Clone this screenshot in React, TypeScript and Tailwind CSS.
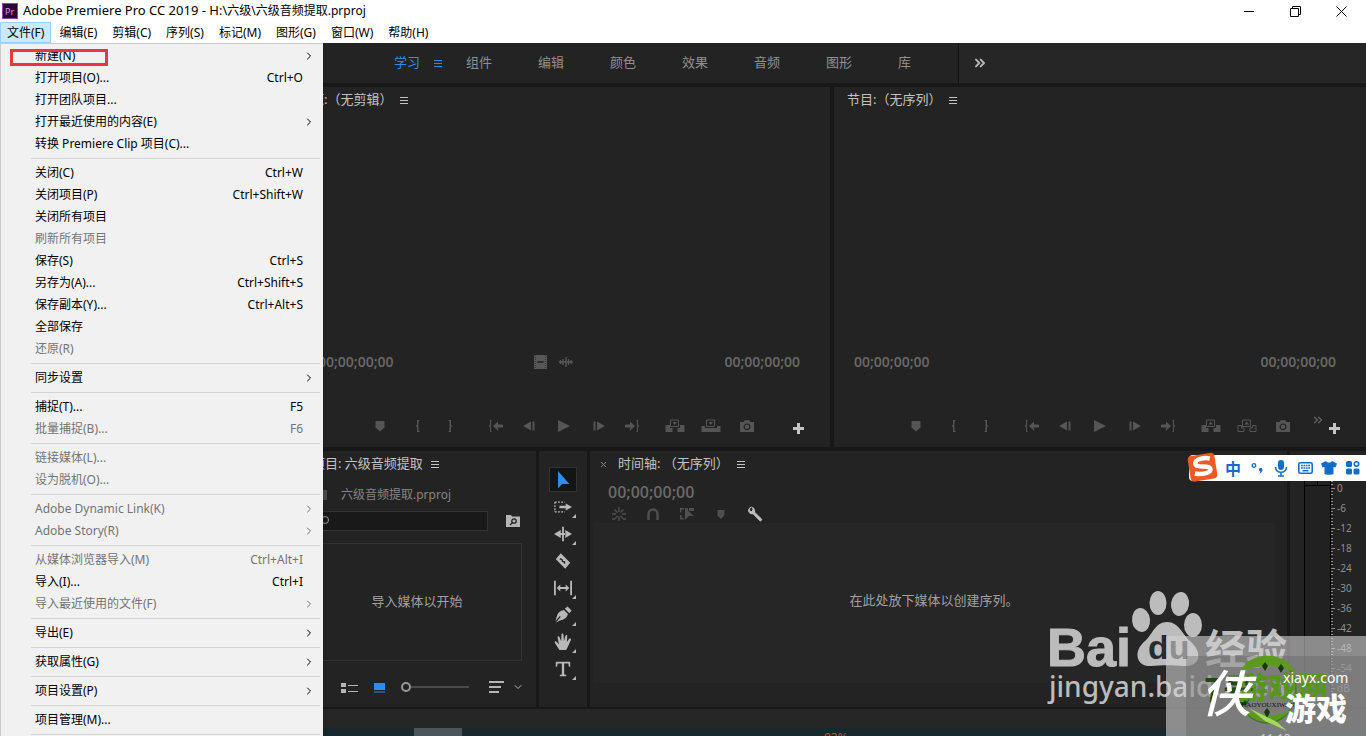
import React, { useState } from 'react';
import { ChevronDown, ChevronRight, ChevronsRight } from 'lucide-react';

type MenuEntry = { label: string; keys?: string; sub?: boolean; off?: boolean };

const menuBar = ['文件(F)', '编辑(E)', '剪辑(C)', '序列(S)', '标记(M)', '图形(G)', '窗口(W)', '帮助(H)'];

const fileMenu: MenuEntry[][] = [
  [
    { label: '新建(N)', sub: true },
    { label: '打开项目(O)...', keys: 'Ctrl+O' },
    { label: '打开团队项目...' },
    { label: '打开最近使用的内容(E)', sub: true },
    { label: '转换 Premiere Clip 项目(C)...' },
  ],
  [
    { label: '关闭(C)', keys: 'Ctrl+W' },
    { label: '关闭项目(P)', keys: 'Ctrl+Shift+W' },
    { label: '关闭所有项目' },
    { label: '刷新所有项目', off: true },
    { label: '保存(S)', keys: 'Ctrl+S' },
    { label: '另存为(A)...', keys: 'Ctrl+Shift+S' },
    { label: '保存副本(Y)...', keys: 'Ctrl+Alt+S' },
    { label: '全部保存' },
    { label: '还原(R)', off: true },
  ],
  [{ label: '同步设置', sub: true }],
  [
    { label: '捕捉(T)...', keys: 'F5' },
    { label: '批量捕捉(B)...', keys: 'F6', off: true },
  ],
  [
    { label: '链接媒体(L)...', off: true },
    { label: '设为脱机(O)...', off: true },
  ],
  [
    { label: 'Adobe Dynamic Link(K)', sub: true, off: true },
    { label: 'Adobe Story(R)', sub: true, off: true },
  ],
  [
    { label: '从媒体浏览器导入(M)', keys: 'Ctrl+Alt+I', off: true },
    { label: '导入(I)...', keys: 'Ctrl+I' },
    { label: '导入最近使用的文件(F)', sub: true, off: true },
  ],
  [{ label: '导出(E)', sub: true }],
  [{ label: '获取属性(G)', sub: true }],
  [{ label: '项目设置(P)', sub: true }],
  [{ label: '项目管理(M)...' }],
];

const workspaces = ['学习', '组件', '编辑', '颜色', '效果', '音频', '图形', '库'];
const levels = ['0', '-6', '-12', '-18', '-24', '-30', '-36', '-42', '-48', '-54', 'dB'];

function Lines() {
  return (
    <svg width="8" height="7" viewBox="0 0 8 7" stroke="currentColor">
      <path d="M0 .5h8M0 3.500h8M0 6.500h8" />
    </svg>
  );
}

function PanelTitle({ children }: { children: React.ReactNode }) {
  return (
    <div className="flex h-[26px] shrink-0 items-center gap-2 whitespace-nowrap text-[13px] text-[#c2c2c2]">
      <h2>{children}</h2>
      <button aria-label="面板菜单"><Lines /></button>
    </div>
  );
}

function IconButton({ label, className, children }: { label: string; className: string; children: React.ReactNode }) {
  return (
    <button aria-label={label} className={`flex h-8 items-center justify-center ${className}`}>
      <svg width="20" height="16" viewBox="0 0 20 16" fill="currentColor">{children}</svg>
    </button>
  );
}

// The two monitors share everything but the clip icons and the last edit buttons
function Monitor({ title, source }: { title: string; source?: boolean }) {
  return (
    <section className="flex min-w-0 flex-1 flex-col bg-[#232323] pb-[5px]">
      <div className="pl-[13px]"><PanelTitle>{title}</PanelTitle></div>
      <div className="flex-1" />
      <div className="mb-9 flex h-6 items-center justify-between pl-5 pr-[30px] font-['Open_Sans',sans-serif] text-sm font-semibold text-[#6a6a6a]">
        <span>00;00;00;00</span>
        {source && (
          <div className="flex items-center gap-3 pr-3 text-[#575757]">
            <svg width="13" height="14" viewBox="0 0 13 14">
              <path fill="currentColor" d="M0 0h13v14H0z" />
              <path stroke="#232323" strokeDasharray="1 1" d="M1.5 0v14M11.5 0v14" opacity=".6" />
              <path stroke="#1b1b1b" strokeWidth="1.4" d="M3.5 7h6" />
            </svg>
            <svg width="14" height="12" viewBox="0 0 14 12" stroke="currentColor">
              <path d="M0 6h14M1.500 4v4M4 3v6M7 1v10M9.500 3v6M12 4v4" strokeWidth="1.300" />
            </svg>
          </div>
        )}
        <span>00;00;00;00</span>
      </div>
      <div className="flex items-center text-[#555]">
        <div className="flex-1" />
        <IconButton label="添加标记" className="mr-[5px] w-[34px]">
          <path d="M5.500 3h9v6.500L10 13.500 5.500 9.500z" />
        </IconButton>
        <IconButton label="标记入点" className="w-8">
          <path d="M11.500 2H9v5L7.500 8 9 9v5h2.500v-1H10.500V8.500L10 8l.5-.5V3h1z" />
        </IconButton>
        <IconButton label="标记出点" className="mr-[13px] w-8">
          <path d="M8.500 2H11v5l1.500 1L11 9v5H8.500v-1h1V8.500L10 8l-.5-.5V3h-1z" />
        </IconButton>
        <IconButton label="转到入点" className="w-[34px]">
          <path d="M5.500 2H4v5L2.500 8 4 9v5h1.500v-1H5V3h.5zM12 3.500v3h5v3h-5v3L7 8z" />
        </IconButton>
        <IconButton label="后退一帧" className="w-[34px]">
          <path d="M3 8l8-4.500v9zM12.500 3.500H14.500v9H12.500z" />
        </IconButton>
        <IconButton label="播放" className="w-[34px]">
          <path d="M4 2l12 6-12 6z" />
        </IconButton>
        <IconButton label="前进一帧" className="w-[34px]">
          <path d="M17 8L9 3.500v9zM5.500 3.500H7.500v9H5.500z" />
        </IconButton>
        <IconButton label="转到出点" className="mr-2 w-[34px]">
          <path d="M14.500 2H16v5l1.500 1L16 9v5h-1.500v-1h.5V3h-.5zM8 3.500v3H3v3h5v3L13 8z" />
        </IconButton>
        <IconButton label={source ? '插入' : '提升'} className="w-9">
          <path d="M.5 7H5v3h2.500v4h-7zM12.500 10H15V7h4.500v7h-7z" />
          <path d="M5.500 2h8v6.500h-8z" fill="none" stroke="currentColor" />
          <path d={source ? 'M7.500 4h4.500L9.700 7z' : 'M7.500 6.500h4.500L9.700 3.500z'} />
        </IconButton>
        <IconButton label={source ? '覆盖' : '提取'} className="w-9">
          {source
            ? <path d="M.5 8H4v2h12V8h3.500v6H.5z" />
            : <path d="M1 7.500h3.500V10H7v3.500H1zM19 7.500h-3.500V10H13v3.500h6z" fill="none" stroke="currentColor" />}
          <path d="M5.500 2h8v6.500h-8z" fill="none" stroke="currentColor" />
          <path d={source ? 'M7.500 4h4.500L9.700 7z' : 'M7.500 6.500h4.500L9.700 3.500z'} />
        </IconButton>
        <IconButton label="导出帧" className="w-9">
          <path d="M3 4h3.500l1-1.800h5l1 1.800H17v10H3z" />
          <circle cx="10" cy="8.800" r="2.800" fill="none" stroke="#232323" strokeWidth="1.200" />
        </IconButton>
        <div className="flex flex-1 justify-end">
          {!source && (
            <button aria-label="更多按钮" className="mb-3 mr-1 text-[#6a6a6a]"><ChevronsRight size={14} strokeWidth={2} /></button>
          )}
          <button aria-label="按钮编辑器" className="mr-[26px] mt-1 text-[#c4c4c4]">
            <svg width="11" height="11" viewBox="0 0 11 11" fill="currentColor"><path d="M4 0h3v4h4v3H7v4H4V7H0V4h4z" /></svg>
          </button>
        </div>
      </div>
    </section>
  );
}

const tools = [
  { label: '选择工具', art: <path d="M4.500 0v19.500l4.500-5h8z" fill="#2d8cf0" /> },
  {
    label: '向前选择轨道工具',
    art: (
      <>
        <path d="M1 4.500h11M1 15.500h11M1 4.500v11" fill="none" stroke="currentColor" strokeWidth="1.400" strokeDasharray="2 1.500" />
        <path d="M6 8.500h7V6l7 4-7 4v-2.500H6z" />
      </>
    ),
    more: true,
  },
  { label: '波纹编辑工具', art: <path d="M9 2h2v16H9zM7.500 5.500v9L0 10zM12.500 5.500v9L20 10zM7 9h6v2H7z" />, more: true },
  {
    label: '剃刀工具',
    art: (
      <>
        <path d="M7.500 1.500L18 12l-5.500 6.500L2 8z" />
        <path d="M6.500 7.500l2.500 1 .5 2 2 .5.500 2" fill="none" stroke="#232323" strokeWidth="1.500" />
      </>
    ),
  },
  {
    label: '外滑工具',
    art: <path d="M0 2h2v16H0zM18 2h2v16h-2zM3 10l4-4v3h6V6l4 4-4 4v-3H7v3z" />,
    more: true,
  },
  {
    label: '钢笔工具',
    art: <path d="M12 3l3-2.500 4.500 4.500L17 8zM11 4.500l4.500 4.500c-1 4-4 6.500-9 7L2 18.500l5.500-6.500-1-1L1.500 17 3 12c1-4.500 4-7 8-7.500z" />,
    more: true,
  },
  {
    label: '手形工具',
    art: <path d="M6 19l-5-8c-.8-1.500.8-2.300 1.700-1.200L5.500 12.500 4 5c-.2-1.600 1.700-1.900 2.100-.3L8 9l.3-7.200c0-1.700 2.200-1.700 2.200 0L11 9l1.700-6c.5-1.500 2.300-1 2 .5L14.300 10l2.500-3.500c1-1 2.700 0 2 1.300L15 16l-1.500 3z" />,
    more: true,
  },
  { label: '文字工具', art: <path d="M2 2h16v5.500h-1.500L16 4h-4.700v12l2.200.5V18h-7v-1.500l2.200-.5V4H4l-.5 3.500H2z" />, more: true },
];

function FileMenu() {
  return (
    <div role="menu" className="absolute left-0 top-full z-20 w-[323px] border-l border-t border-[#c9c9c9] bg-[#f1f1f1] pb-2 pt-px shadow-md">
      {fileMenu.map((group, i) => (
        <div key={i} className="ml-[30px]">
          {i > 0 && <hr className="my-[3px] mr-[3px] border-[#d5d5d5]" />}
          {group.map(item => (
            <button
              key={item.label}
              role="menuitem"
              disabled={item.off}
              className="flex h-[22px] w-full items-center pl-1 text-left text-black hover:bg-[#91c9f7] disabled:text-[#747474]"
            >
              <span className="flex-1">{item.label}</span>
              {item.keys && <span className="mr-5">{item.keys}</span>}
              {item.sub && <ChevronRight size={12} strokeWidth={2} className="mr-2" />}
            </button>
          ))}
        </div>
      ))}
      <hr className="ml-[30px] mr-[3px] mt-[3px] border-[#d5d5d5]" />
    </div>
  );
}

function ProjectPanel() {
  const [size, setSize] = useState(0);
  return (
    <section className="flex w-[238px] shrink-0 flex-col bg-[#232323] pl-[14px] pr-[14px]">
      <PanelTitle>项目: 六级音频提取</PanelTitle>
      <div className="mt-2 flex h-5 items-center gap-[14px] text-xs text-[#858585]">
        <span className="h-[10px] w-[15px] bg-[#4a4a4a]" />
        <span className="whitespace-nowrap">六级音频提取.prproj</span>
      </div>
      <div className="mt-[6px] flex items-center justify-between">
        <div className="relative">
          <input aria-label="搜索" className="block h-5 w-[176px] border border-[#333] bg-[#191919] pl-5 text-xs text-[#bbb] outline-none" />
          <svg className="absolute left-1 top-1" width="14" height="12" viewBox="0 0 14 12" fill="none" stroke="#999">
            <circle cx="9" cy="5" r="3.500" /><path d="M6 7l-4 4" />
          </svg>
        </div>
        <button aria-label="新建搜索素材箱" className="mr-[2px]">
          <svg width="14" height="12" viewBox="0 0 14 12">
            <path d="M0 0h5l1 1.500h8V12H0z" fill="#b5b5b5" />
            <circle cx="8" cy="6" r="2.200" fill="none" stroke="#232323" strokeWidth="1.300" />
            <path d="M6.500 7.500L4 10" stroke="#232323" strokeWidth="1.300" />
          </svg>
        </button>
      </div>
      <div className="mt-3 flex h-[118px] items-center justify-center border border-[#333] text-[13px] text-[#a0a0a0]">
        导入媒体以开始
      </div>
      <div className="flex flex-1 items-center pl-[29px] pt-[6px] text-[#b5b5b5]">
        <button aria-label="列表视图">
          <svg width="17" height="11" viewBox="0 0 17 11" fill="currentColor"><path d="M0 1h5v4H0zM0 7h5v4H0zM7 3h10v1H7zM7 9h10v1H7z" /></svg>
        </button>
        <button aria-label="图标视图" className="ml-4">
          <svg width="11" height="11" viewBox="0 0 11 11" fill="#2d8cf0"><path d="M0 1h11v7H0zM0 9.500h11v1H0z" /></svg>
        </button>
        <input
          type="range"
          aria-label="缩放"
          value={size}
          onChange={e => setSize(Number(e.target.value))}
          className="ml-4 h-[2px] w-[68px] appearance-none bg-[#4a4a4a] [&::-webkit-slider-thumb]:size-[10px] [&::-webkit-slider-thumb]:appearance-none [&::-webkit-slider-thumb]:rounded-full [&::-webkit-slider-thumb]:border-2 [&::-webkit-slider-thumb]:border-solid [&::-webkit-slider-thumb]:border-[#999] [&::-webkit-slider-thumb]:bg-[#232323]"
        />
        <button aria-label="排序" className="ml-5">
          <svg width="15" height="12" viewBox="0 0 15 12" fill="currentColor"><path d="M0 0h15v2H0zM0 5h12v2H0zM0 10h10v2H0z" /></svg>
        </button>
        <button aria-label="排序选项" className="ml-2"><ChevronDown size={12} strokeWidth={2} /></button>
      </div>
    </section>
  );
}

function Timeline() {
  return (
    <section className="flex min-w-0 flex-1 flex-col bg-[#232323] pl-[3px]">
      <div className="flex items-center gap-3 pl-2">
        <button aria-label="关闭时间轴" className="text-[#8a8a8a]">
          <svg width="5" height="5" viewBox="0 0 5 5" stroke="currentColor"><path d="M0 0l5 5M5 0L0 5" /></svg>
        </button>
        <PanelTitle>时间轴: （无序列）</PanelTitle>
      </div>
      <div className="mt-[3px] h-[25px] pl-[15px] font-['Open_Sans',sans-serif] text-base/6 font-semibold text-[#6a6a6a]">00;00;00;00</div>
      <div className="flex h-[18px] items-center pl-[9px] text-[#4f4f4f]">
        <IconButton label="嵌套序列" className="w-[34px]">
          <path d="M10 1v5M5.500 3.500l3 3M14.500 3.500l-3 3M3 8h4M13 8h4M6 12.500l2.500-2.500M14 12.500l-2.500-2.500M10 10.500V15M3 13h3M14 13h3" stroke="currentColor" strokeWidth="1.400" />
        </IconButton>
        <IconButton label="对齐" className="w-[34px]">
          <path d="M5.500 14V8a4.500 4.500 0 019 0v6" fill="none" stroke="currentColor" strokeWidth="2.500" />
        </IconButton>
        <IconButton label="链接选择项" className="w-[34px]">
          <path d="M3 2h4v1.500H4.500v3H3zM3 9h1.500v3H7v1.500H3zM8 2h3v4H8zM12 2h5v3h-5zM8 2l9 8h-5l-4 4z" />
        </IconButton>
        <IconButton label="添加标记" className="w-[34px]">
          <path d="M6.500 4h7v5L10 13 6.500 9.500z" />
        </IconButton>
        <IconButton label="时间轴显示设置" className="w-[34px] text-[#c0c0c0]">
          <path d="M6.500 1C4.800 1.300 3.300 3 3.500 5c.3 2 2.500 3.300 4.500 2.800l6.500 6.700c1.200 1.200 3-.6 1.800-1.800L9.600 6.200C10 4 9 2 7.500 1.300L8 4 6.500 5.500 4.500 5 4.300 3z" stroke="currentColor" strokeWidth=".8" />
        </IconButton>
      </div>
      <div className="mb-6 mr-3 flex flex-1 items-center justify-center bg-[#262626] pb-1 text-[13px] text-[#a0a0a0]">
        在此处放下媒体以创建序列。
      </div>
    </section>
  );
}

function Meters() {
  return (
    <section className="flex w-[76px] shrink-0 bg-[#232323] pl-[14px] pt-[26px]">
      <div className="mb-2 w-[27px] border-x border-black bg-[#212121]">
        <div className="mx-auto h-[9px] border-b border-black"><div className="mx-auto h-full w-px bg-black" /></div>
      </div>
      <ul className="pt-px text-[10px] text-[#8f8f8f]">
        {levels.map(level => (
          <li key={level} className="flex h-5 items-center gap-[2px]">
            <svg width="4" height="20" viewBox="0 0 4 20" stroke="#8f8f8f">
              <path d="M0 .5h2M0 3.500h2M0 6.500h2M0 10.500h4M0 13.500h2M0 16.500h2" />
            </svg>
            {level}
          </li>
        ))}
      </ul>
    </section>
  );
}

function InputMethodBar() {
  return (
    <div className="absolute right-0 top-[455px] z-30 flex h-[26px] items-center rounded-l bg-white pl-[30px] pr-px text-[#0f6ecb]">
      <svg className="absolute -left-[2px] -top-1" width="34" height="32" viewBox="0 0 34 32">
        <g transform="rotate(-9 17 16)">
          <rect x="2" y="3" width="27" height="26" rx="4" fill="#ea5a24" />
          <path d="M24 8.500c-5-2-15-2-15 3 0 5 14 2.500 14 7.500 0 4.500-11 4-16 2" fill="none" stroke="#fff" strokeWidth="4.500" />
        </g>
      </svg>
      <button aria-label="中英文切换" className="flex w-6 justify-center pl-1 font-['Noto_Sans_CJK_SC',sans-serif] text-base font-bold">中</button>
      <button aria-label="标点" className="ml-[2px] flex w-6 justify-center">
        <svg width="12" height="12" viewBox="0 0 12 12" fill="currentColor">
          <circle cx="3" cy="3.500" r="1.800" fill="none" stroke="currentColor" strokeWidth="1.300" />
          <path d="M8 7.500a1.700 1.700 0 013.400 0c0 2-1 3.500-3 4.300.7-1 .9-1.700.9-2.400C8.500 9.200 8 8.500 8 7.500z" />
        </svg>
      </button>
      <button aria-label="语音" className="flex w-6 justify-center">
        <svg width="14" height="17" viewBox="0 0 14 17">
          <rect x="4" y="0" width="6" height="10" rx="3" fill="currentColor" />
          <path d="M1.500 7c0 7 11 7 11 0M7 12v4M4 16h6" fill="none" stroke="currentColor" strokeWidth="1.600" />
        </svg>
      </button>
      <button aria-label="软键盘" className="flex w-6 justify-center">
        <svg width="15" height="12" viewBox="0 0 15 12">
          <rect x=".8" y=".8" width="13.400" height="10.400" rx="1.500" fill="none" stroke="currentColor" strokeWidth="1.600" />
          <path d="M3 3.500h9M3 6h9" stroke="currentColor" strokeWidth="1.500" strokeDasharray="1.800 .6" />
          <path d="M4.500 8.700h6" stroke="currentColor" strokeWidth="1.500" />
        </svg>
      </button>
      <button aria-label="皮肤" className="flex w-6 justify-center">
        <svg width="16" height="14" viewBox="0 0 16 14" fill="currentColor"><path d="M5 0c1 2 5 2 6 0l5 2.500-1.500 4-2-.5v7c0 1-9 1-9 0V6l-2 .5L0 2.500z" /></svg>
      </button>
      <button aria-label="工具箱" className="flex w-6 justify-center">
        <svg width="14" height="14" viewBox="0 0 14 14" fill="currentColor">
          <rect width="6" height="6" rx="1.500" /><rect y="7.500" width="6" height="6" rx="1.500" /><rect x="7.500" y="7.500" width="6" height="6" rx="1.500" />
          <circle cx="10.500" cy="3" r="2.200" fill="none" stroke="currentColor" strokeWidth="1.600" />
        </svg>
      </button>
    </div>
  );
}

function Watermarks() {
  return (
    <div className="pointer-events-none absolute bottom-0 right-0 z-30 h-[150px] w-[320px] overflow-hidden">
      <svg width="320" height="150" viewBox="0 0 320 150">
        <g fill="#bcbcbc">
          <text x="1" y="80" fontFamily="Liberation Sans" fontSize="54" fontWeight="bold" stroke="#bcbcbc">Bai</text>
          <ellipse cx="95" cy="34" rx="9" ry="12" transform="rotate(-6 95 34)" />
          <ellipse cx="112" cy="17" rx="8.500" ry="12" />
          <ellipse cx="134" cy="18" rx="9" ry="12" transform="rotate(8 134 18)" />
          <ellipse cx="147" cy="39" rx="9" ry="12" />
          <path d="M121 36c-12 0-14 12-22 19-13 11-8 26 6 25 10-1 22-1 32 0 18 1 20-14 7-25-8-7-11-19-23-19z" />
          <text x="159" y="78" fontFamily="Noto Sans CJK SC" fontSize="41" fontWeight="bold">经验</text>
          <text x="3" y="111" fontFamily="Noto Sans" fontSize="28" fontWeight="500">jingyan.baidu.com</text>
        </g>
        <text x="102" y="73" fontFamily="Liberation Sans" fontSize="34" fontWeight="bold" fill="#2b2b2b">du</text>
        <path d="M120 50h200v100H120z" fill="#d2d2d2" opacity=".6" />
        <path d="M140 70h180v80H140z" fill="#5f5f5f" opacity=".35" />
        <ellipse cx="221" cy="104" rx="29" ry="33" fill="none" stroke="#3c7d13" strokeWidth="1.500" />
        <path d="M194 86c8-20 44-24 56 2-14-10-38-10-56-2z" fill="#5c9a1b" />
        <path d="M196 122c14 8 34 10 48 2-8 14-36 16-48-2z" fill="#5c9a1b" />
        <path d="M219 76l3 4-3 5-3-5zM235 78l3 4-3 5-3-5zM221 122l3 4-3 6-3-6z" fill="#17380b" />
        <text x="158" y="116" fontFamily="Noto Sans CJK SC" fontSize="32" fontWeight="bold" fill="#1d4a12">7号</text>
        <text x="192" y="112" fontFamily="Noto Sans CJK SC" fontSize="30" fontWeight="900" fill="#57961a">游戏网</text>
        <text x="191" y="121" fontFamily="Liberation Serif" fontSize="7" fill="#111">ZHAOYOUXIWANG</text>
        <path d="M203 122l28 14 10 9-22-10z" fill="#a5d85b" />
        <g fill="#fff">
          <text x="155" y="126" fontFamily="Noto Sans CJK SC" fontSize="50" fontWeight="500" fontStyle="italic">侠</text>
          <text x="239" y="134" fontFamily="Noto Sans CJK SC" fontSize="31" fontWeight="900">游戏</text>
          <text x="237" y="97" fontFamily="Noto Sans" fontSize="14">xiayx.com</text>
        </g>
        <text x="214" y="157" fontFamily="Noto Sans" fontSize="12" fill="#d0d0d0">11:18</text>
      </svg>
    </div>
  );
}

export default function App() {
  const [workspace, setWorkspace] = useState('学习');
  const [tool, setTool] = useState('选择工具');

  return (
    <div className="relative flex h-screen w-full flex-col overflow-hidden bg-[#181818] font-['Noto_Sans','Noto_Sans_CJK_SC',sans-serif]">
      {/* Title bar */}
      <header className="flex h-[22px] shrink-0 items-center bg-white pl-[2px] text-black">
        <svg width="16" height="16" viewBox="0 0 16 16">
          <rect x=".5" y=".5" width="15" height="15" fill="#2a0634" stroke="#9b3fb5" />
          <text x="3" y="11.500" fontFamily="Noto Sans" fontSize="9" fill="#e38cff">Pr</text>
        </svg>
        <h1 className="ml-[5px] flex items-baseline whitespace-pre text-[13px]">
          Adobe Premiere Pro CC 2019 - H:\<span className="text-xs">六级\六级音频提取.prproj</span>
        </h1>
        <div className="ml-auto flex pr-[2px]">
          <button aria-label="最小化" className="flex w-[46px] justify-center">
            <svg width="11" height="11" viewBox="0 0 11 11" stroke="#000"><path d="M0 5.500h10" /></svg>
          </button>
          <button aria-label="还原" className="flex w-[46px] justify-center">
            <svg width="11" height="11" viewBox="0 0 11 11" fill="none" stroke="#000"><path d="M.5 2.500h8v8h-8zM2.500 2.500v-2h8v8h-2" /></svg>
          </button>
          <button aria-label="关闭" className="flex w-[46px] justify-center">
            <svg width="11" height="11" viewBox="0 0 11 11" stroke="#000"><path d="M.5.5l10 10M10.500.5l-10 10" /></svg>
          </button>
        </div>
      </header>

      <nav className="relative flex h-[21px] shrink-0 gap-px bg-white text-xs">
        {menuBar.map((name, i) => (
          <button
            key={name}
            className={`h-full whitespace-nowrap px-[7px] ${i === 0 ? 'bg-[#cce8ff] outline outline-1 -outline-offset-1 outline-[#99d1ff]' : ''}`}
          >
            {name}
          </button>
        ))}
        <FileMenu />
        <div className="absolute left-[10px] top-[27px] z-30 h-[17px] w-[98px] border-[3px] border-[#e8373e]" />
      </nav>

      {/* Workspace switcher */}
      <div className="flex h-10 shrink-0 items-center bg-[#232323] pl-[394px] text-[13px] text-[#8f8f8f]">
        {workspaces.map(name => (
          <button
            key={name}
            onClick={() => setWorkspace(name)}
            className={`flex w-[72px] items-center gap-[14px] whitespace-nowrap ${workspace === name ? 'text-[#2d8cf0]' : ''}`}
          >
            {name}
            {workspace === name && <Lines />}
          </button>
        ))}
        <div className="-ml-3 flex h-full flex-1 items-center border-l border-[#141414] bg-[#262626] pl-[13px]">
          <button aria-label="更多工作区" className="text-[#b5b5b5]"><ChevronsRight size={16} strokeWidth={3} /></button>
        </div>
      </div>

      <main className="mt-1 flex min-h-0 flex-1 gap-1">
        <aside className="w-[294px] shrink-0 bg-[#232323]" />
        <div className="flex min-w-0 flex-1 flex-col gap-1">
          <div className="flex min-h-0 flex-1 gap-1">
            <Monitor title="源:（无剪辑）" source />
            <Monitor title="节目:（无序列）" />
          </div>
          <div className="flex h-64 shrink-0 gap-[3px]">
            <ProjectPanel />
            <div className="flex w-12 shrink-0 flex-col items-center bg-[#232323] pr-px pt-4 text-[#b8b8b8]">
              {tools.map(t => (
                <button
                  key={t.label}
                  aria-label={t.label}
                  onClick={() => setTool(t.label)}
                  className={`relative mb-[2px] flex h-[25px] w-7 items-center justify-center border ${tool === t.label ? 'border-[#333] bg-[#141414]' : 'border-transparent'}`}
                >
                  <svg width="18" height="18" viewBox="0 0 20 20" fill="currentColor">{t.art}</svg>
                  {t.more && (
                    <svg className="absolute bottom-0 right-0" width="4" height="4" viewBox="0 0 4 4" fill="currentColor"><path d="M4 0v4H0z" /></svg>
                  )}
                </button>
              ))}
            </div>
            <Timeline />
            <Meters />
          </div>
        </div>
      </main>

      <footer className="mt-[2px] h-[19px] shrink-0 bg-[#262626]" />
      <div className="flex h-2 shrink-0 overflow-hidden bg-[#19282c] pl-[414px]">
        <div className="w-12 bg-[#4b565b]" />
        <span className="ml-[362px] text-xs leading-5 text-[#d9423a]">93%</span>
      </div>

      <InputMethodBar />
      <Watermarks />
    </div>
  );
}
